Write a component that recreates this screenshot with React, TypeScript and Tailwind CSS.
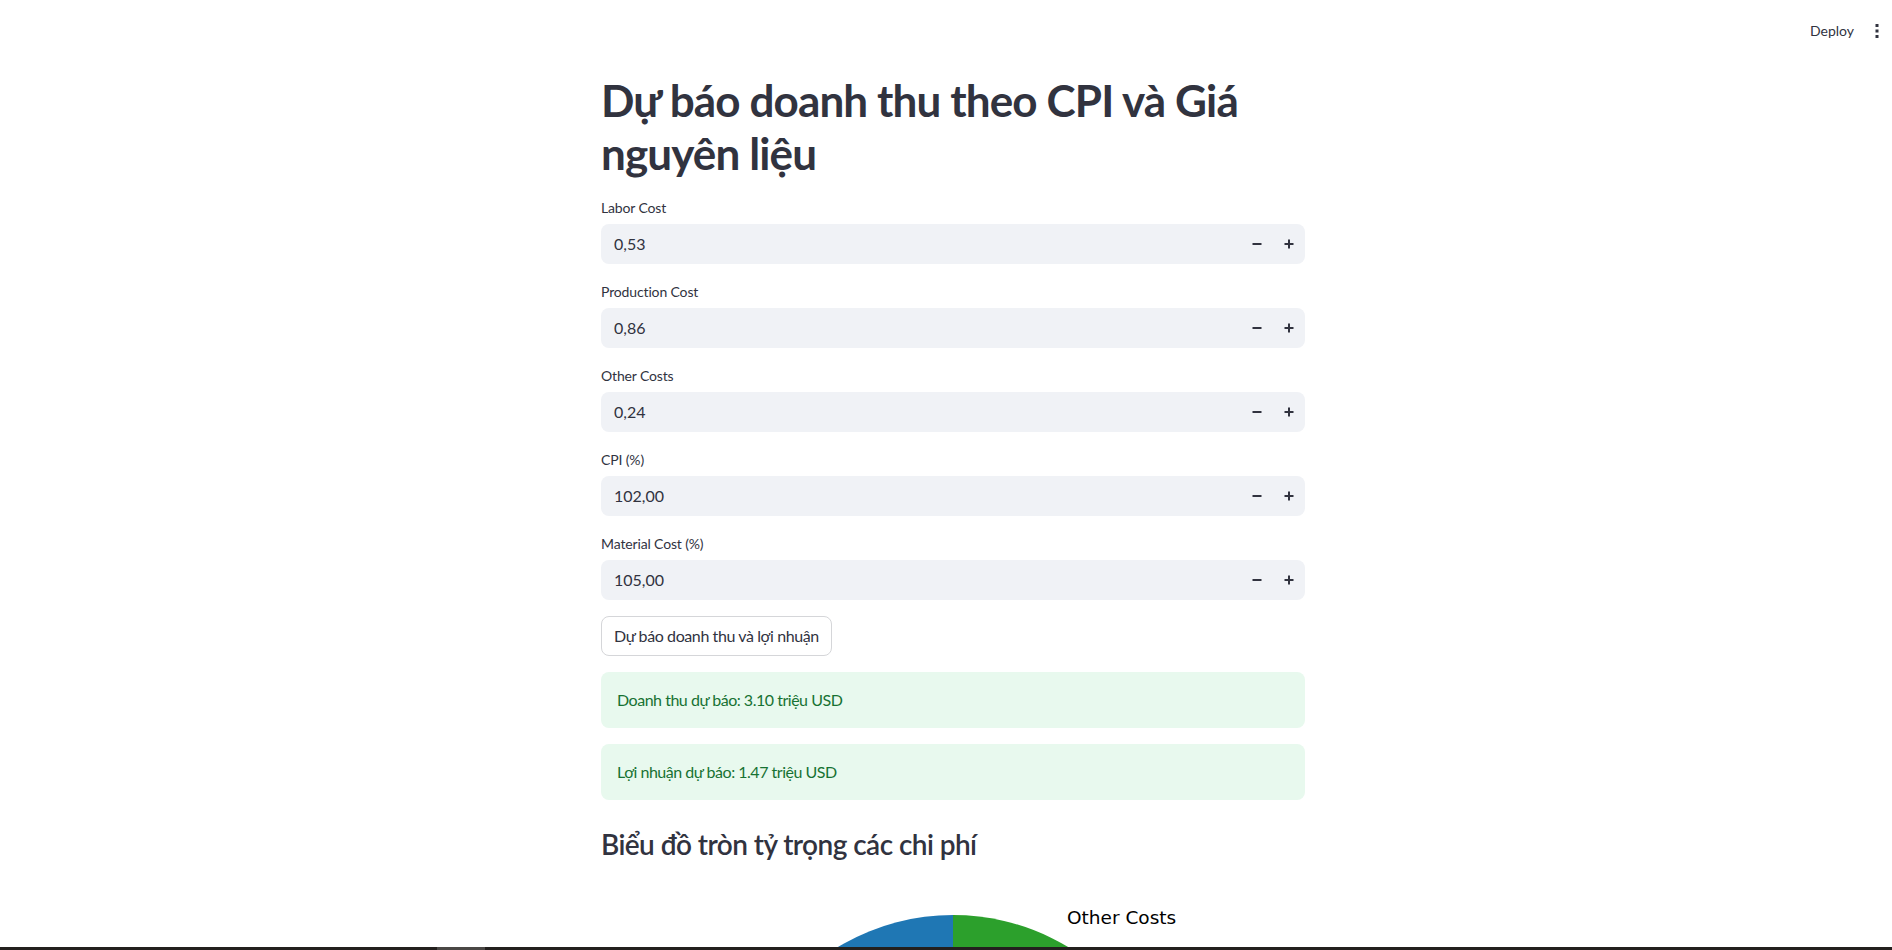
import React from "react";

const fields = [
  { label: "Labor Cost", value: "0,53" },
  { label: "Production Cost", value: "0,86" },
  { label: "Other Costs", value: "0,24" },
  { label: "CPI (%)", value: "102,00" },
  { label: "Material Cost (%)", value: "105,00" },
];

function NumberField({ label, value }: { label: string; value: string }) {
  return (
    <div className="flex flex-col">
      <label className="h-6 mb-1 flex items-center text-sm tracking-[-0.01em] text-[#31333f]">{label}</label>
      <div className="h-10 rounded-lg bg-[#f0f2f6] flex items-center">
        <span className="flex-1 pl-[13px] text-base text-[#31333f]">{value}</span>
        <button className="w-8 h-10 flex items-center justify-center" title="Decrement">
          <svg width="10" height="10" viewBox="0 0 10 10">
            <rect x="0.5" y="4" width="9" height="2" fill="#31333f" />
          </svg>
        </button>
        <button className="w-8 h-10 flex items-center justify-center" title="Increment">
          <svg width="10" height="10" viewBox="0 0 10 10">
            <rect x="0.5" y="4" width="9" height="2" fill="#31333f" />
            <rect x="4" y="0.5" width="2" height="9" fill="#31333f" />
          </svg>
        </button>
      </div>
    </div>
  );
}

function CostPie() {
  // matplotlib pie, startangle=90, default colours; only the top is in view
  const cx = 352;
  const cy = 242;
  const r = 223;
  return (
    <svg width="704" height="60" viewBox="0 0 704 60" className="block overflow-visible">
      <path d={`M${cx},${cy} L352,19 A${r} ${r} 0 0 0 153.3,343.2 Z`} fill="#1f77b4" />
      <path d={`M${cx},${cy} L153.3,343.2 A${r} ${r} 0 1 0 530.1,107.8 Z`} fill="#ff7f0e" />
      <path d={`M${cx},${cy} L530.1,107.8 A${r} ${r} 0 0 0 352,19 Z`} fill="#2ca02c" />
      <text x="466" y="28" fontFamily="DejaVu Sans, sans-serif" fontSize="18.5" fill="#000">
        Other Costs
      </text>
    </svg>
  );
}

export default function App() {
  return (
    <div className="h-[950px] w-full bg-white flex flex-col overflow-hidden font-[Lato,'Noto_Sans',sans-serif] text-[#31333f]">
      {/* Header */}
      <header className="h-[62px] shrink-0 flex items-center justify-end">
        <span className="text-sm text-[#31333f] mr-[21px]">Deploy</span>
        <svg width="4" height="16" viewBox="0 0 4 16" className="mr-[13px]">
          <rect x="0.5" y="1" width="3" height="3" fill="#31333f" />
          <rect x="0.5" y="6.5" width="3" height="3" fill="#31333f" />
          <rect x="0.5" y="12" width="3" height="3" fill="#31333f" />
        </svg>
      </header>

      {/* Main */}
      <main className="flex-1 min-h-0 overflow-hidden flex justify-center pl-[14px]">
        <div className="w-[704px] flex flex-col gap-4 pt-3">
          <h1 className="text-[44px] leading-[1.2] font-bold text-[#31333f] tracking-[-0.02em]">
            Dự báo doanh thu theo CPI và Giá
            <br />
            nguyên liệu
          </h1>

          {fields.map((f) => (
            <NumberField key={f.label} label={f.label} value={f.value} />
          ))}

          <div>
            <button className="h-10 px-3 rounded-lg border border-[#d5d6d9] bg-white text-base tracking-[-0.025em] text-[#31333f]">
              Dự báo doanh thu và lợi nhuận
            </button>
          </div>

          <div className="rounded-lg bg-[#e8f9ee] px-4 py-4 leading-6 text-base tracking-[-0.03em] text-[#177233]">
            Doanh thu dự báo: 3.10 triệu USD
          </div>
          <div className="rounded-lg bg-[#e8f9ee] px-4 py-4 leading-6 text-base tracking-[-0.03em] text-[#177233]">
            Lợi nhuận dự báo: 1.47 triệu USD
          </div>

          <h3 className="pt-3 text-[28px] leading-[1.2] font-semibold tracking-[-0.02em] text-[#31333f]">
            Biểu đồ tròn tỷ trọng các chi phí
          </h3>

          <div className="pt-[19px]">
            <CostPie />
          </div>
        </div>
      </main>

      {/* bottom strip */}
      <div className="h-[3px] shrink-0 bg-[#23201e] flex">
        <div className="w-[437px]" />
        <div className="w-[48px] bg-[#4a4745]" />
      </div>
    </div>
  );
}
